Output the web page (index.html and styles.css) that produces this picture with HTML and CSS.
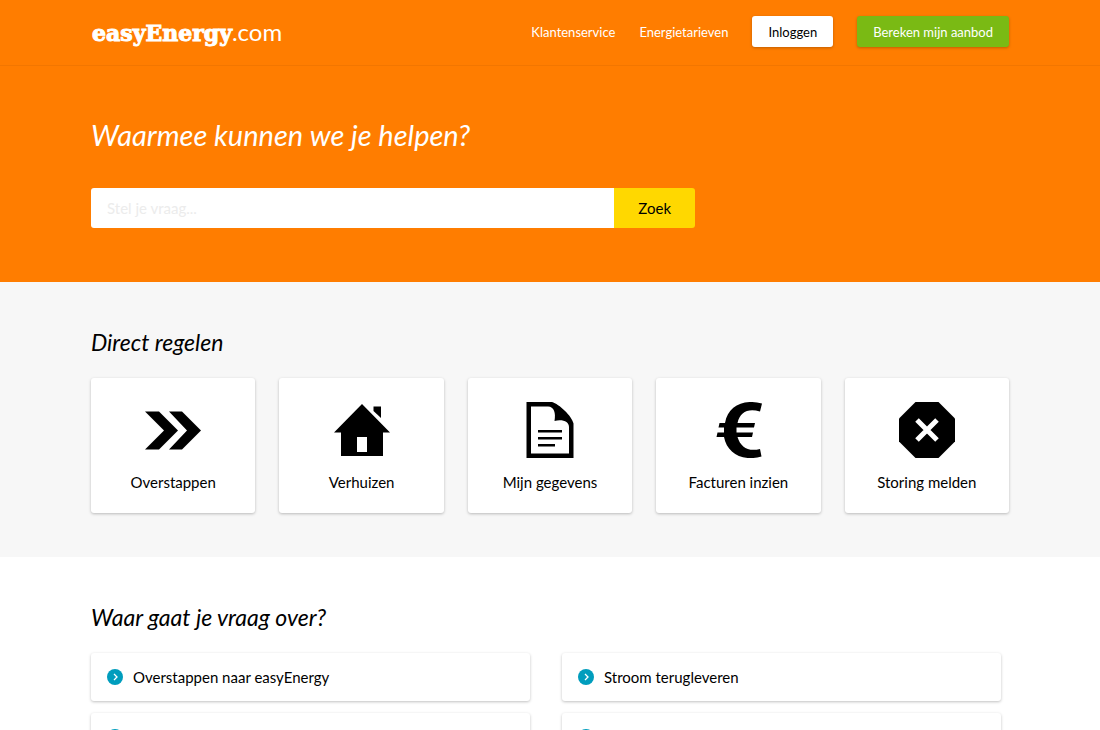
FILE: index.html
```html
<!DOCTYPE html>
<html lang="nl">
  <head>
    <meta charset="UTF-8" />
    <meta name="viewport" content="width=device-width, initial-scale=1.0" />
    <title>Klantenservice - easyEnergy.com</title>
    <link rel="stylesheet" href="styles.css" />
  </head>
  <body>
    <header class="site-header">
      <div class="container header-inner">
        <a class="logo" href="#"><span class="logo-name">easyEnergy</span><span class="logo-tld">.com</span></a>
        <nav class="main-nav">
          <a class="nav-link" href="#">Klantenservice</a>
          <a class="nav-link" href="#">Energietarieven</a>
          <a class="btn btn-white" href="#">Inloggen</a>
          <a class="btn btn-green" href="#">Bereken mijn aanbod</a>
        </nav>
      </div>
    </header>

    <section class="hero">
      <div class="container">
        <h1>Waarmee kunnen we je helpen?</h1>
        <form class="search" action="#">
          <input type="text" name="q" placeholder="Stel je vraag..." aria-label="Stel je vraag" />
          <button type="submit">Zoek</button>
        </form>
      </div>
    </section>

    <section class="direct">
      <div class="container">
        <h2>Direct regelen</h2>
        <div class="cards">
          <a class="card" href="#">
            <svg viewBox="0 0 56 56" aria-hidden="true">
              <path d="M0 9.500h14L33 28.500l-19 19H0l19-19zM24 9.500h13l19 19-19 19H24l18-19z" />
            </svg>
            Overstappen
          </a>
          <a class="card" href="#">
            <svg viewBox="0 0 56 56" aria-hidden="true">
              <path fill-rule="evenodd" d="M28 2l28 28.500h-7V54H7V30.500H0zM23 35v15h10V35z" />
              <path d="M39.500 4.500H47V16l-7.500-7z" />
            </svg>
            Verhuizen
          </a>
          <a class="card" href="#">
            <svg viewBox="0 0 56 56" aria-hidden="true">
              <path fill-rule="evenodd" d="M4.500 0H30c7 2 20 14 21.500 21.500V56h-47zM9 4.500v47h38V25c0-5-6-8-14.500-6C34 11 32 4.500 26 4.500z" />
              <path d="M16 28h24v2.500H16zM16 35h24v2.500H16zM16 42h17v2.500H16z" />
            </svg>
            Mijn gegevens
          </a>
          <a class="card" href="#">
            <svg viewBox="0 0 56 56" aria-hidden="true">
              <path d="M52 1.500l-2 8C38 6 30 10 27.500 21H45l-1 4.500H26.500v5H43l-1 4.500H27.500c3 10 10.500 15 22.500 12l1.500 7.500C32 60 17 51 14 35H6.500l1-4.500H14v-5H8.500l1-4.500h5.500C18 4 33-3.500 52 1.500z" />
            </svg>
            Facturen inzien
          </a>
          <a class="card" href="#">
            <svg viewBox="0 0 56 56" aria-hidden="true">
              <path d="M16.500 0h23L56 16.500v23L39.500 56h-23L0 39.500v-23z" />
              <path class="cross" d="M18 18l20 20M38 18L18 38" />
            </svg>
            Storing melden
          </a>
        </div>
      </div>
    </section>

    <section class="topics">
      <div class="container">
        <h2>Waar gaat je vraag over?</h2>
        <div class="topic-list">
          <a class="topic" href="#">
            <svg viewBox="0 0 16 16" aria-hidden="true"><circle cx="8" cy="8" r="8" /><path d="M7 5l3 3-3 3" /></svg>
            Overstappen naar easyEnergy
          </a>
          <a class="topic" href="#">
            <svg viewBox="0 0 16 16" aria-hidden="true"><circle cx="8" cy="8" r="8" /><path d="M7 5l3 3-3 3" /></svg>
            Stroom terugleveren
          </a>
          <a class="topic" href="#">
            <svg viewBox="0 0 16 16" aria-hidden="true"><circle cx="8" cy="8" r="8" /><path d="M7 5l3 3-3 3" /></svg>
            Energietarieven
          </a>
          <a class="topic" href="#">
            <svg viewBox="0 0 16 16" aria-hidden="true"><circle cx="8" cy="8" r="8" /><path d="M7 5l3 3-3 3" /></svg>
            Verhuizen
          </a>
        </div>
      </div>
    </section>
  </body>
</html>
```

FILE: styles.css
```css
* {
  box-sizing: border-box;
}
body {
  margin: 0;
  font-family: Lato, "Open Sans", sans-serif;
  font-size: 15px;
  line-height: 24px;
  color: #000;
  background-color: #fff;
}
a {
  color: inherit;
  text-decoration: none;
}
.container {
  max-width: 966px;
  margin: 0 auto;
  padding: 0 24px;
}

/* Header */
.site-header {
  background-color: #ff7d00;
  border-bottom: 1px solid #f27600;
  color: #fff;
}
.header-inner {
  display: flex;
  justify-content: space-between;
  align-items: center;
  min-height: 65px;
  padding-bottom: 2px;
}
.logo {
  display: flex;
  align-items: baseline;
  padding: 2px 0 0 1px;
  font-size: 24px;
  line-height: 32px;
}
.logo-name {
  font-family: "DejaVu Serif", serif;
  font-weight: bold;
  font-size: 22px;
  -webkit-text-stroke: 1px #fff;
}
.logo-tld {
  font-weight: 400;
}
.main-nav {
  display: flex;
  align-items: center;
  gap: 24px;
  font-size: 13px;
  line-height: 23px;
}
.nav-link {
  padding-top: 2px;
}
.btn {
  padding: 5px 16px 3px;
  border-radius: 3px;
  box-shadow: 0 1px 3px rgba(0, 0, 0, 0.25);
}
.btn-white {
  background-color: #fff;
  color: #000;
}
.btn-green {
  background-color: #7aba14;
}

/* Search */
.hero {
  padding: 48px 0 54px;
  background-color: #ff7d00;
  color: #fff;
}
h1,
h2 {
  margin: 0;
  font-weight: 400;
  font-style: italic;
}
h1 {
  margin-bottom: 32px;
  font-size: 29px;
  line-height: 42px;
}
h2 {
  margin-bottom: 20px;
  font-size: 23px;
  line-height: 32px;
}
.search {
  display: flex;
  max-width: 604px;
}
.search input {
  flex: 1;
  min-width: 0;
  height: 40px;
  padding: 0 16px;
  border: none;
  border-radius: 3px 0 0 3px;
  font: inherit;
}
.search input::placeholder {
  color: #ececec;
}
.search button {
  padding: 0 24px;
  border: none;
  border-radius: 0 3px 3px 0;
  background-color: #ffd800;
  color: #000;
  font: inherit;
}

/* Cards */
.direct {
  padding: 44px 0;
  background-color: #f7f7f7;
}
.cards {
  display: grid;
  grid-template-columns: repeat(5, 1fr);
  gap: 24px;
}
.card {
  display: flex;
  flex-direction: column;
  align-items: center;
  gap: 12px;
  padding: 24px 8px 19px;
  border-radius: 3px;
  background-color: #fff;
  box-shadow: 0 1px 3px rgba(0, 0, 0, 0.25);
}
.card svg {
  width: 56px;
  height: 56px;
}
.cross {
  stroke: #fff;
  stroke-width: 5px;
}

/* Topics */
.topics {
  padding: 44px 0;
}
.topic-list {
  display: grid;
  grid-template-columns: 1fr 1fr;
  gap: 12px 32px;
  padding-right: 8px;
}
.topic {
  display: flex;
  align-items: center;
  gap: 10px;
  padding: 12px 16px;
  border-radius: 3px;
  box-shadow: 0 1px 3px rgba(0, 0, 0, 0.25);
}
.topic svg {
  width: 16px;
  height: 16px;
  fill: #009dbd;
}
.topic path {
  fill: none;
  stroke: #fff;
  stroke-width: 1.3;
}
```
